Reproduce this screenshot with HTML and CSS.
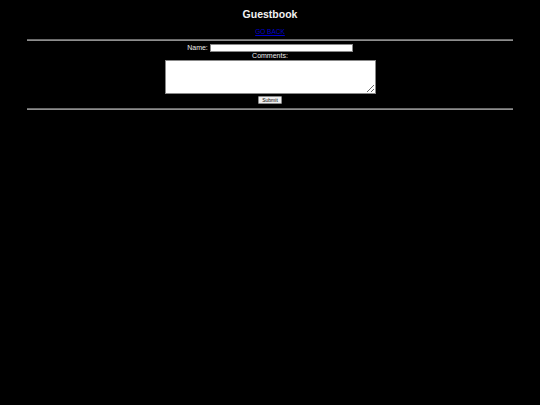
FILE: index.html
```html
<!DOCTYPE html>
<html>
<head>
<meta charset="utf-8">
<title>Guestbook</title>
<link rel="stylesheet" href="styles.css">
</head>
<body>
<h1 class="title">Guestbook</h1>
<p class="back"><a href="#">GO BACK</a></p>
<hr class="rule">
<form class="gb-form">
  <div class="name-row"><label class="lbl" for="name">Name:</label><input class="name-input" id="name" type="text"></div>
  <label class="lbl comments-lbl" for="comments">Comments:</label>
  <textarea class="comments" id="comments"></textarea>
  <button class="submit" type="button">Submit</button>
</form>
<hr class="rule">
</body>
</html>
```
FILE: styles.css
```css
html, body {
  background: #000;
}
body {
  margin: 0;
  color: #fff;
  font-family: "Liberation Sans", Arial, sans-serif;
  font-size: 7px;
}
.title {
  margin: 8px 0 0;
  font-size: 10.5px;
  line-height: 12px;
  font-weight: bold;
  text-align: center;
  color: #f2f2f2;
}
.back {
  margin: 7.5px 0 0;
  font-size: 6.5px;
  line-height: 8px;
  text-align: center;
}
.back a {
  color: #0000cc;
  text-decoration: underline;
}
.rule {
  width: 90%;
  margin: 3.5px auto 0;
  height: 0;
  border: 0;
  border-top: 1px solid #6a6a6a;
  border-bottom: 1px solid #8e8e8e;
}
.gb-form {
  display: flex;
  flex-direction: column;
  align-items: center;
  margin: 3px 0 0;
}
.name-row {
  display: flex;
  align-items: center;
  gap: 2px;
  height: 8px;
}
.lbl {
  font-size: 7px;
  line-height: 8px;
  color: #ececec;
}
.name-input {
  box-sizing: border-box;
  width: 143px;
  height: 8px;
  margin: 0;
  padding: 0 1px;
  border: 1px solid #888;
  background: #fff;
  font-size: 6px;
}
.comments-lbl {
  display: block;
}
.comments {
  box-sizing: border-box;
  width: 211px;
  height: 34px;
  margin: 0;
  padding: 1px;
  border: 1px solid #888;
  background: #fff;
  font-size: 6px;
  resize: both;
}
.submit {
  box-sizing: border-box;
  width: 24px;
  height: 8px;
  margin: 2px 0 0;
  padding: 0;
  border: 1px solid #8a8a8a;
  border-radius: 1px;
  background: #efefef;
  color: #000;
  font-family: "Liberation Sans", Arial, sans-serif;
  font-size: 5px;
  line-height: 6px;
}
.gb-form + .rule {
  margin-top: 4px;
}
```
